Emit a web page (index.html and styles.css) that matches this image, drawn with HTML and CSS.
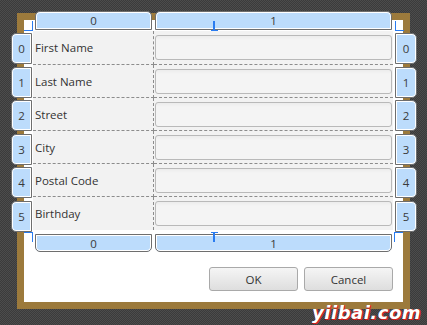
FILE: index.html
```html
<!DOCTYPE html>
<html lang="en">
<head>
    <meta charset="UTF-8">
    <title>GridPane Form</title>
    <link rel="stylesheet" href="styles.css">
</head>
<body>

    <div class="stage">
        <!-- The dialog window -->
        <div class="window">
            <div class="form-grid">
                <div class="cell cell-label">First Name</div>
                <div class="cell cell-field"><div class="text-field"></div></div>
                <div class="cell cell-label">Last Name</div>
                <div class="cell cell-field"><div class="text-field"></div></div>
                <div class="cell cell-label">Street</div>
                <div class="cell cell-field"><div class="text-field"></div></div>
                <div class="cell cell-label">City</div>
                <div class="cell cell-field"><div class="text-field"></div></div>
                <div class="cell cell-label">Postal Code</div>
                <div class="cell cell-field"><div class="text-field"></div></div>
                <div class="cell cell-label last">Birthday</div>
                <div class="cell cell-field last"><div class="text-field"></div></div>
            </div>

            <div class="button-bar">
                <button class="btn">OK</button>
                <button class="btn">Cancel</button>
            </div>
        </div>

        <!-- Grid lines overlay: row / column index headers -->
        <div class="grid-overlay">
            <div class="col-headers top">
                <div class="hdr hdr-top">0</div>
                <div class="hdr hdr-top">1</div>
            </div>
            <div class="row-headers left">
                <div class="hdr hdr-left">0</div>
                <div class="hdr hdr-left">1</div>
                <div class="hdr hdr-left">2</div>
                <div class="hdr hdr-left">3</div>
                <div class="hdr hdr-left">4</div>
                <div class="hdr hdr-left">5</div>
            </div>
            <div class="row-headers right">
                <div class="hdr hdr-right">0</div>
                <div class="hdr hdr-right">1</div>
                <div class="hdr hdr-right">2</div>
                <div class="hdr hdr-right">3</div>
                <div class="hdr hdr-right">4</div>
                <div class="hdr hdr-right">5</div>
            </div>
            <div class="col-headers bottom">
                <div class="hdr hdr-bottom">0</div>
                <div class="hdr hdr-bottom">1</div>
            </div>
        </div>

        <!-- blue bounds markers -->
        <div class="mark mark-top"></div>
        <div class="mark mark-bottom"></div>
        <div class="corner corner-tl"></div>
        <div class="corner corner-tr"></div>
        <div class="corner corner-bl"></div>
        <div class="corner corner-br"></div>

        <div class="watermark">yiibai.com</div>
    </div>

</body>
</html>
```

FILE: styles.css
```css
:root {
    --frame: #9c7a3c;
    --hdr-bg: #bcdcfc;
    --hdr-border: #6e6e6e;
    --dash: #8c8c8c;
    --grid-bg: #f2f2f2;
    --marker: #2a7cf0;
    --text: #333333;
}

* { box-sizing: border-box; margin: 0; padding: 0; }

body {
    width: 427px;
    height: 325px;
    overflow: hidden;
    font-family: 'Open Sans', 'Noto Sans', sans-serif;
    font-size: 11.5px;
    color: var(--text);
    background-color: #444;
    background-image: repeating-conic-gradient(#3b3b3b 0 25%, #4c4c4c 0 50%);
    background-size: 2px 2px;
}

.stage {
    position: relative;
    width: 427px;
    height: 325px;
    padding: 13px 0 0 17px;
}

/* dialog with the brown frame */
.window {
    width: 393px;
    height: 296px;
    border: 7px solid var(--frame);
    background: #fff;
    padding: 11px 10px 11px 9px;
    display: flex;
    flex-direction: column;
}

.form-grid {
    display: grid;
    grid-template-columns: 121px 1fr;
    grid-template-rows: 34px repeat(5, 33px);
    background: var(--grid-bg);
}

.cell {
    display: flex;
    align-items: center;
    border-bottom: 1px dashed var(--dash);
}
.cell.last { border-bottom: none; }

.cell-label {
    padding-left: 2px;
    border-right: 1px dashed var(--dash);
}

.cell-field { padding: 0 1px 0 1px; }

.text-field {
    width: 100%;
    height: 25px;
    border: 1px solid #b9b9b9;
    border-radius: 3px;
    background: linear-gradient(#ececec, #f4f4f4 4px, #f4f4f4);
}

.button-bar {
    margin-top: auto;
    display: flex;
    justify-content: flex-end;
    gap: 6px;
}

.btn {
    width: 89px;
    height: 24px;
    border: 1px solid #a9a9a9;
    border-radius: 3px;
    background: linear-gradient(#f5f5f5, #dedede);
    font-family: 'Open Sans', 'Noto Sans', sans-serif;
    font-size: 11.5px;
    color: var(--text);
}

/* overlay of the index headers */
.grid-overlay {
    position: absolute;
    left: 11px;
    top: 11px;
    width: 406px;
    height: 241px;
    display: grid;
    grid-template-columns: 21px 3px 117px 3px 237px 3px 22px;
    grid-template-rows: 19px 3px 199px 2px 18px;
}

.col-headers {
    grid-column: 3 / 6;
    display: flex;
    gap: 3px;
}
.col-headers.top { grid-row: 1; }
.col-headers.bottom { grid-row: 5; }
.col-headers .hdr:first-child { width: 117px; }
.col-headers .hdr:last-child { flex: 1; }

.row-headers {
    grid-row: 3;
    display: flex;
    flex-direction: column;
    gap: 2.6px;
}
.row-headers.left { grid-column: 1; }
.row-headers.right { grid-column: 7; }
.row-headers .hdr { height: 31px; }

.hdr {
    display: flex;
    align-items: center;
    justify-content: center;
    background: var(--hdr-bg);
    border: 1px solid var(--hdr-border);
    box-shadow: inset 0 0 0 1px #fff;
    font-size: 11.5px;
    color: #3a3a3a;
}
.hdr-top { border-radius: 5px 5px 0 0; }
.hdr-bottom { border-radius: 0 0 5px 5px; }
.hdr-left { border-radius: 5px 0 0 5px; }
.hdr-right { border-radius: 0 5px 5px 0; }

/* blue alignment markers */
.mark {
    position: absolute;
    left: 211px;
    width: 7px;
    height: 10px;
}
.mark::before {
    content: '';
    position: absolute;
    left: 2px;
    width: 2px;
    height: 10px;
    background: var(--marker);
}
.mark::after {
    content: '';
    position: absolute;
    left: 0;
    width: 7px;
    height: 1px;
    background: var(--marker);
}
.mark-top { top: 21px; }
.mark-top::after { bottom: 0; }
.mark-bottom { top: 232px; }
.mark-bottom::after { top: 0; }

.corner {
    position: absolute;
    width: 9px;
    height: 10px;
    border-color: var(--marker);
    border-style: solid;
    border-width: 0;
}
.corner-tl { left: 24px; top: 21px; border-right-width: 1px; border-bottom-width: 1px; }
.corner-tr { left: 395px; top: 21px; border-left-width: 1px; border-bottom-width: 1px; }
.corner-bl { left: 24px; top: 232px; border-right-width: 1px; border-top-width: 1px; }
.corner-br { left: 394px; top: 232px; border-left-width: 1px; border-top-width: 1px; }

.watermark {
    position: absolute;
    right: 6px;
    bottom: 2px;
    font-family: 'DejaVu Sans', sans-serif;
    font-weight: bold;
    font-style: italic;
    font-size: 18px;
    letter-spacing: 0.5px;
    color: #fff;
    text-shadow: 1px 1px 0 #d21f1f, 1px 0 0 #d21f1f, 0 1px 0 #b01010;
}
```
